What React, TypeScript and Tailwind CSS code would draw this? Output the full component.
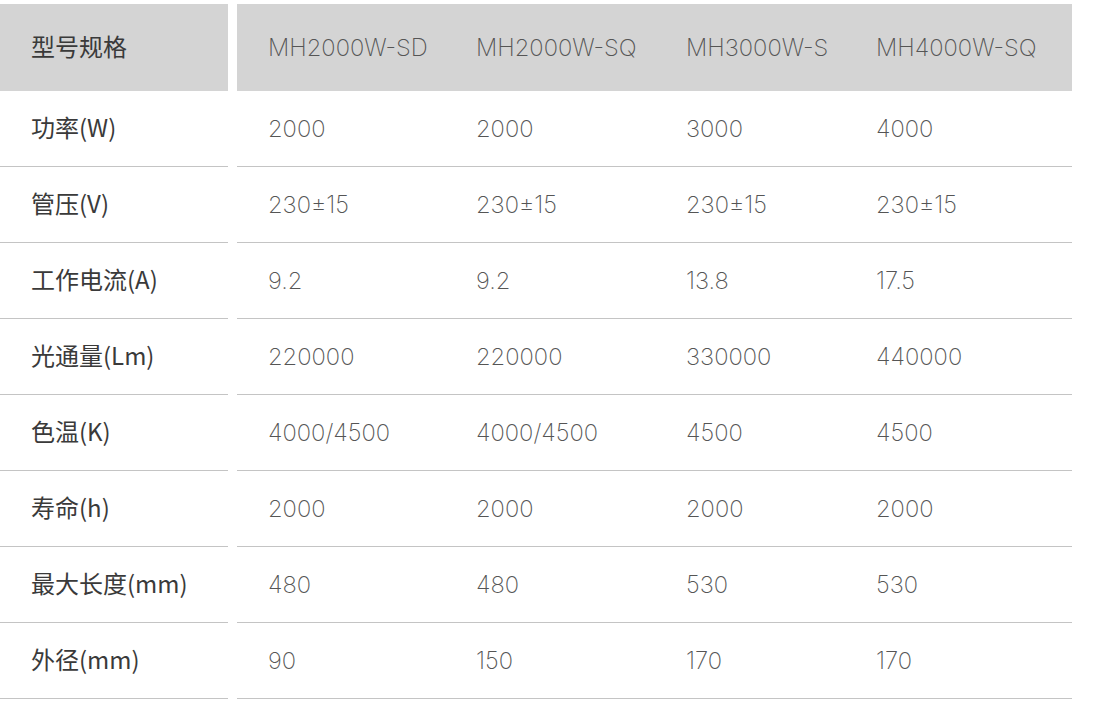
import React from 'react'

const models = ['MH2000W-SD', 'MH2000W-SQ', 'MH3000W-S', 'MH4000W-SQ']

// spec rows - label then the four model values
const specs: {label: string; values: string[]}[] = [
  {label: '功率(W)', values: ['2000', '2000', '3000', '4000']},
  {label: '管压(V)', values: ['230±15', '230±15', '230±15', '230±15']},
  {label: '工作电流(A)', values: ['9.2', '9.2', '13.8', '17.5']},
  {label: '光通量(Lm)', values: ['220000', '220000', '330000', '440000']},
  {label: '色温(K)', values: ['4000/4500', '4000/4500', '4500', '4500']},
  {label: '寿命(h)', values: ['2000', '2000', '2000', '2000']},
  {label: '最大长度(mm)', values: ['480', '480', '530', '530']},
  {label: '外径(mm)', values: ['90', '150', '170', '170']},
]

const labelFont = {fontFamily: '"Noto Sans CJK SC", sans-serif'}
const valueFont = {fontFamily: 'Inter, "Noto Sans CJK SC", sans-serif'}

export default function App() {
  return (
    <div className="w-[1096px] h-[701px] bg-white pt-[4px] overflow-hidden">
      {/* Header */}
      <div className="flex gap-[9px]">
        <div className="w-[228px] h-[87px] bg-[#d4d4d4] flex items-center pl-[31px] pb-[3px] text-[24px] font-normal text-[#3a3a3a]" style={labelFont}>
          型号规格
        </div>
        <div className="w-[835px] h-[87px] bg-[#d4d4d4] grid grid-cols-[208px_210px_190px_1fr] items-center">
          {models.map(m => (
            <div key={m} className="pl-[31px] text-[23.7px] font-extralight text-[#555]" style={valueFont}>
              {m}
            </div>
          ))}
        </div>
      </div>

      {/* Rows */}
      {specs.map(row => (
        <div key={row.label} className="flex gap-[9px]">
          <div className="w-[228px] h-[76px] border-b border-[#c4c4c4] flex items-center pl-[31px] pb-[3px] text-[24px] font-normal text-[#3a3a3a]" style={labelFont}>
            {row.label}
          </div>
          <div className="w-[835px] h-[76px] border-b border-[#c4c4c4] grid grid-cols-[208px_210px_190px_1fr] items-center">
            {row.values.map((v, i) => (
              <div key={i} className="pl-[31px] text-[23.7px] font-extralight text-[#555]" style={valueFont}>
                {v}
              </div>
            ))}
          </div>
        </div>
      ))}
    </div>
  )
}
